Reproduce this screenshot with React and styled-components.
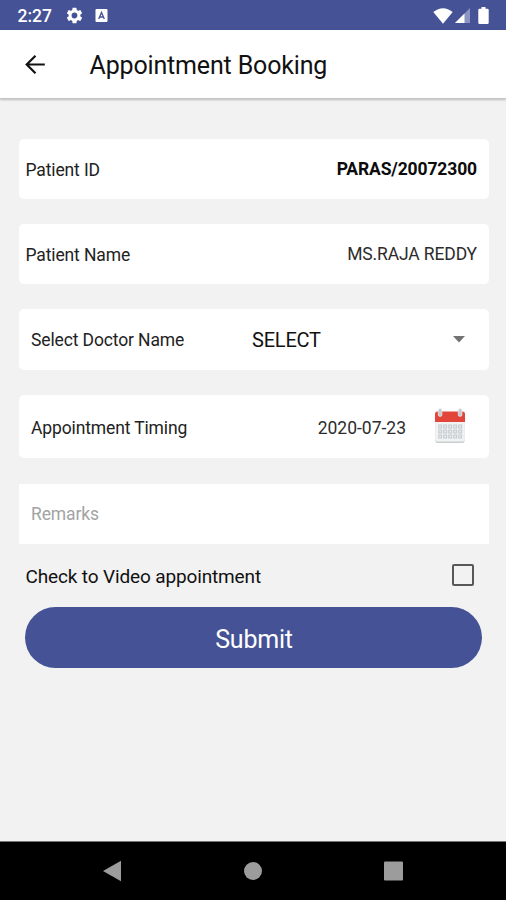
import React from 'react';
import styled, { createGlobalStyle } from 'styled-components';

const GlobalStyle = createGlobalStyle`
  *, *::before, *::after { box-sizing: border-box; }
  body { margin: 0; background: #f2f2f2; font-family: Roboto, sans-serif; }
`;

const Screen = styled.div`
  display: flex;
  flex-direction: column;
  width: 506px;
  height: 900px;
  overflow: hidden;
  background: #f2f2f2;
  color: #111;
`;

const StatusBar = styled.div`
  flex: none;
  display: flex;
  align-items: center;
  height: 30px;
  padding: 1px 17px 0 17.5px;
  background: #455396;
  color: #fff;
`;

const Clock = styled.span`
  width: 48px;
  font-size: 17.5px;
  font-weight: 500;
  line-height: 28px;
`;

const StatusIcons = styled.div`
  display: flex;
  align-items: center;
  gap: ${(p) => p.$gap}px;
  margin-left: ${(p) => (p.$end ? 'auto' : '0')};
`;

const Header = styled.header`
  flex: none;
  display: flex;
  align-items: center;
  height: 69px;
  padding: 1px 0 0 21px;
  background: #fff;
  border-bottom: 1px solid #c4c6c5;
  box-shadow: 0 1px 2px rgba(0, 0, 0, 0.22);
`;

const BackButton = styled.button`
  display: flex;
  width: 68.5px;
  padding: 0;
  border: 0;
  background: none;
`;

const Title = styled.h1`
  margin: 3px 0 0;
  font-size: 25px;
  font-weight: 400;
  line-height: 30px;
  letter-spacing: -0.16px;
`;

const Form = styled.main`
  flex: 1;
  display: flex;
  flex-direction: column;
  padding: 40px 17px 0 19px;
`;

const Card = styled.section`
  flex: none;
  display: flex;
  align-items: center;
  height: ${(p) => p.$height}px;
  margin-bottom: ${(p) => p.$gap}px;
  padding: 0 12px 0 ${(p) => (p.$inset ? 12 : 6.5)}px;
  border-radius: ${(p) => (p.$square ? 0 : 5)}px;
  background: #fff;
`;

const Label = styled.span`
  font-size: 17.5px;
  line-height: 22px;
  letter-spacing: -0.13px;
  color: ${(p) => (p.$muted ? '#a3a3a3' : '#222')};
  white-space: nowrap;
  margin-top: ${(p) => (p.$raised ? 0 : 2)}px;
`;

const Value = styled(Label)`
  margin: 0 0 0 auto;
  font-weight: ${(p) => (p.$bold ? 700 : 400)};
  color: ${(p) => (p.$bold ? '#0c0c0c' : '#2c2c2c')};
`;

const DateValue = styled(Value)`
  margin: 2px 28px 0 auto;
  letter-spacing: 0;
`;

const CalendarButton = styled.button`
  display: flex;
  margin: 0 11px 2px 0;
  padding: 0;
  border: 0;
  background: none;
`;

const Select = styled.div`
  flex: none;
  display: flex;
  align-items: center;
  justify-content: space-between;
  width: 214px;
  margin-left: auto;
  margin-right: 11px;
  font-size: 20px;
  letter-spacing: -0.2px;
`;

const CheckRow = styled.label`
  flex: none;
  display: flex;
  align-items: center;
  justify-content: space-between;
  height: 63px;
  padding: 1px 15px 0 6.5px;
  font-size: 19px;
  letter-spacing: -0.14px;
`;

const CheckBox = styled.span`
  width: 22px;
  height: 22px;
  margin-top: -2px;
  border: 2px solid #585858;
  border-radius: 2px;
`;

const Submit = styled.button`
  flex: none;
  height: 61px;
  margin: 0 7px 0 6px;
  padding: 3px 0 0 1px;
  border: 0;
  border-radius: 31px;
  background: #455396;
  color: #fff;
  font: 400 25px Roboto, sans-serif;
  letter-spacing: -0.2px;
`;

const NavBar = styled.nav`
  flex: none;
  display: flex;
  align-items: center;
  justify-content: space-between;
  height: 59px;
  padding: 0 102px;
  border-top: 1px solid #777;
  background: #000;
`;

const GearIcon = () => (
  <svg width="17" height="17" viewBox="1.5 1.5 21 21" fill="#fff">
    <path d="M19.14 12.94c.04-.3.06-.61.06-.94s-.02-.64-.07-.94l2.03-1.58a.49.49 0 0 0 .12-.61l-1.92-3.32a.488.488 0 0 0-.59-.22l-2.39.96c-.5-.38-1.03-.7-1.62-.94l-.36-2.54a.484.484 0 0 0-.48-.41h-3.84c-.24 0-.43.17-.47.41l-.36 2.54c-.59.24-1.13.57-1.62.94l-2.39-.96c-.22-.08-.47 0-.59.22L2.74 8.87c-.12.21-.08.47.12.61l2.03 1.58c-.05.3-.09.63-.09.94s.02.64.07.94l-2.03 1.58a.49.49 0 0 0-.12.61l1.92 3.32c.12.22.37.29.59.22l2.39-.96c.5.38 1.03.7 1.62.94l.36 2.54c.05.24.24.41.48.41h3.84c.24 0 .44-.17.47-.41l.36-2.54c.59-.24 1.13-.56 1.62-.94l2.39.96c.22.08.47 0 .59-.22l1.92-3.32c.12-.22.07-.47-.12-.61l-2.01-1.58zM12 15.6A3.61 3.61 0 0 1 8.400 12c0-1.980 1.620-3.600 3.600-3.600s3.600 1.620 3.600 3.600-1.620 3.600-3.600 3.600z" />
  </svg>
);

const KeyboardIcon = () => (
  <svg width="13" height="13" viewBox="0 0 13 13">
    <rect x="0.500" y="0" width="12" height="13" rx="1" fill="#fff" />
    <path d="M3.700 10 6.500 3.400 9.300 10M4.700 8h3.600" fill="none" stroke="#455396" strokeWidth="1.300" />
  </svg>
);

const WifiIcon = () => (
  <svg width="20" height="16" viewBox="0 0 20 16">
    <path d="M0.300 4Q10-3.600 19.700 4L10 15.800Z" fill="#fff" />
  </svg>
);

const SignalIcon = () => (
  <svg width="15" height="15" viewBox="0 0 15 15">
    <path d="M15 0V15H0Z" fill="#8c95c2" />
    <path d="M9.500 5.500V15H0Z" fill="#fff" />
  </svg>
);

const BatteryIcon = () => (
  <svg width="11" height="17" viewBox="0 0 11 17">
    <path d="M3.500 0h4v1.800H9.500A1.200 1.200 0 0 1 10.700 3v12.800A1.200 1.200 0 0 1 9.500 17h-8A1.200 1.200 0 0 1 .3 15.800V3a1.200 1.200 0 0 1 1.200-1.200h2z" fill="#fff" />
  </svg>
);

const BackIcon = () => (
  <svg width="28" height="28" viewBox="0 0 28 28" fill="none" stroke="#111" strokeWidth="2.200">
    <path d="M23.800 13.500H6M14.500 4.700 5.700 13.500l8.800 8.800" />
  </svg>
);

const CaretIcon = () => (
  <svg width="13" height="7" viewBox="0 0 13 7">
    <path d="M0 0h12L6 6.500Z" fill="#737373" />
  </svg>
);

const CalendarIcon = () => (
  <svg width="32" height="36" viewBox="0 0 32 36">
    <rect x="1.500" y="5" width="29" height="30" rx="2" fill="#c9cfd1" />
    <rect x="1.500" y="5" width="29" height="28.500" rx="2" fill="#f1f3f3" />
    <path d="M1 14V6a2.500 2.500 0 0 1 2.500-2.500h25A2.500 2.500 0 0 1 31 6v8z" fill="#e2463b" />
    {[18.5, 23.5, 28.5].map((y) => (
      <path key={y} d={`M4.200 ${y}H28.200`} stroke="#c3cacd" strokeWidth="4" strokeDasharray="4 1" />
    ))}
    {[18.5, 23.5, 28.5].map((y) => (
      <path key={y} d={`M5.200 ${y}H28`} stroke="#e6eaeb" strokeWidth="2" strokeDasharray="2 3" />
    ))}
    <g fill="#c4cbce" stroke="#eef0f1" strokeWidth="0.700">
      <rect x="4.300" y="0.500" width="3.600" height="8" rx="1.800" />
      <rect x="24.300" y="0.500" width="3.600" height="8" rx="1.800" />
    </g>
  </svg>
);

export default function App() {
  return (
    <>
      <GlobalStyle />
      <Screen>
        <StatusBar>
          <Clock>2:27</Clock>
          <StatusIcons $gap={12}>
            <GearIcon />
            <KeyboardIcon />
          </StatusIcons>
          <StatusIcons $gap={8} $end>
            <StatusIcons $gap={2}>
              <WifiIcon />
              <SignalIcon />
            </StatusIcons>
            <BatteryIcon />
          </StatusIcons>
        </StatusBar>
        <Header>
          <BackButton aria-label="Back"><BackIcon /></BackButton>
          <Title>Appointment Booking</Title>
        </Header>
        <Form>
          <Card $height={60} $gap={25}>
            <Label>Patient ID</Label>
            <Value $bold>PARAS/20072300</Value>
          </Card>
          <Card $height={60} $gap={25}>
            <Label>Patient Name</Label>
            <Value>MS.RAJA REDDY</Value>
          </Card>
          <Card $height={61} $gap={25} $inset>
            <Label $raised>Select Doctor Name</Label>
            <Select>SELECT<CaretIcon /></Select>
          </Card>
          <Card $height={63} $gap={26} $inset>
            <Label>Appointment Timing</Label>
            <DateValue>2020-07-23</DateValue>
            <CalendarButton aria-label="Pick a date"><CalendarIcon /></CalendarButton>
          </Card>
          <Card $height={60} $gap={0} $inset $square>
            <Label $muted $raised>Remarks</Label>
          </Card>
          <CheckRow>
            Check to Video appointment
            <CheckBox />
          </CheckRow>
          <Submit>Submit</Submit>
        </Form>
        <NavBar>
          <svg width="20" height="22" viewBox="0 0 20 22"><path d="M1 11 19 .8V21.200Z" fill="#9c9c9c" /></svg>
          <svg width="18" height="18" viewBox="0 0 18 18"><circle cx="9" cy="9" r="9" fill="#9c9c9c" /></svg>
          <svg width="20" height="20" viewBox="0 0 20 20"><rect x="0" y="0.500" width="19" height="19" rx="1" fill="#9c9c9c" /></svg>
        </NavBar>
      </Screen>
    </>
  );
}
